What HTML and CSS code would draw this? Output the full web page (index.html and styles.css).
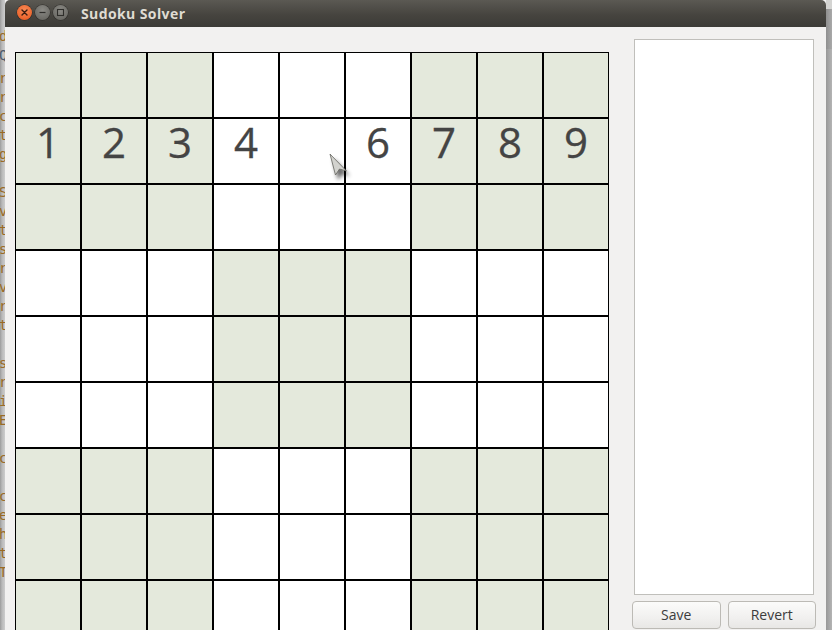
FILE: index.html
```html
<!DOCTYPE html>
<html>
<head>
<meta charset="utf-8">
<title>Sudoku Solver</title>
<link rel="stylesheet" href="styles.css">
</head>
<body>
<div class="screen">
  <div class="edge-left">
    <div class="bg-line">d</div>
    <div class="bg-line icon">Q</div>
    <div class="bg-line">r</div>
    <div class="bg-line">r</div>
    <div class="bg-line">c</div>
    <div class="bg-line">t</div>
    <div class="bg-line">g</div>
    <div class="bg-line gap">S</div>
    <div class="bg-line">v</div>
    <div class="bg-line">t</div>
    <div class="bg-line">s</div>
    <div class="bg-line">r</div>
    <div class="bg-line">v</div>
    <div class="bg-line">r</div>
    <div class="bg-line">t</div>
    <div class="bg-line gap">s</div>
    <div class="bg-line">r</div>
    <div class="bg-line">i</div>
    <div class="bg-line">E</div>
    <div class="bg-line gap">c</div>
    <div class="bg-line gap">c</div>
    <div class="bg-line">e</div>
    <div class="bg-line">h</div>
    <div class="bg-line">t</div>
    <div class="bg-line">T</div>
  </div>
  <div class="window">
    <div class="titlebar">
      <div class="wm-buttons">
        <span class="wm-btn close">
          <svg width="15" height="15" viewBox="0 0 15 15"><path d="M5 5 L10 10 M10 5 L5 10" stroke="#3a1d10" stroke-width="1.4" stroke-linecap="round"/></svg>
        </span>
        <span class="wm-btn">
          <svg width="15" height="15" viewBox="0 0 15 15"><path d="M4.5 7.5 H10.5" stroke="#2f2e2b" stroke-width="1.2"/></svg>
        </span>
        <span class="wm-btn">
          <svg width="15" height="15" viewBox="0 0 15 15"><rect x="4.5" y="4.5" width="6" height="6" fill="none" stroke="#2f2e2b" stroke-width="1.1"/></svg>
        </span>
      </div>
      <div class="title">Sudoku Solver</div>
    </div>
    <div class="content">
      <div class="board">
        <div class="cell g"></div><div class="cell g"></div><div class="cell g"></div><div class="cell"></div><div class="cell"></div><div class="cell"></div><div class="cell g"></div><div class="cell g"></div><div class="cell g"></div>
        <div class="cell g">1</div><div class="cell g">2</div><div class="cell g">3</div><div class="cell">4</div><div class="cell"></div><div class="cell">6</div><div class="cell g">7</div><div class="cell g">8</div><div class="cell g">9</div>
        <div class="cell g"></div><div class="cell g"></div><div class="cell g"></div><div class="cell"></div><div class="cell"></div><div class="cell"></div><div class="cell g"></div><div class="cell g"></div><div class="cell g"></div>
        <div class="cell"></div><div class="cell"></div><div class="cell"></div><div class="cell g"></div><div class="cell g"></div><div class="cell g"></div><div class="cell"></div><div class="cell"></div><div class="cell"></div>
        <div class="cell"></div><div class="cell"></div><div class="cell"></div><div class="cell g"></div><div class="cell g"></div><div class="cell g"></div><div class="cell"></div><div class="cell"></div><div class="cell"></div>
        <div class="cell"></div><div class="cell"></div><div class="cell"></div><div class="cell g"></div><div class="cell g"></div><div class="cell g"></div><div class="cell"></div><div class="cell"></div><div class="cell"></div>
        <div class="cell g"></div><div class="cell g"></div><div class="cell g"></div><div class="cell"></div><div class="cell"></div><div class="cell"></div><div class="cell g"></div><div class="cell g"></div><div class="cell g"></div>
        <div class="cell g"></div><div class="cell g"></div><div class="cell g"></div><div class="cell"></div><div class="cell"></div><div class="cell"></div><div class="cell g"></div><div class="cell g"></div><div class="cell g"></div>
        <div class="cell g"></div><div class="cell g"></div><div class="cell g"></div><div class="cell"></div><div class="cell"></div><div class="cell"></div><div class="cell g"></div><div class="cell g"></div><div class="cell g"></div>
      </div>
      <div class="side">
        <div class="textview"></div>
        <div class="actions">
          <button class="btn">Save</button>
          <button class="btn">Revert</button>
        </div>
      </div>
    </div>
  </div>
  <div class="edge-right">
    <div class="er-top"></div>
    <div class="er-band"></div>
    <div class="er-rest"></div>
  </div>
  <svg class="pointer" width="30" height="34" viewBox="0 0 30 34">
    <defs>
      <filter id="sh" x="-50%" y="-50%" width="200%" height="200%">
        <feGaussianBlur stdDeviation="2.2"/>
      </filter>
    </defs>
    <polygon points="4,5 9,27 14,21 21,23" fill="#000" opacity="0.6" filter="url(#sh)"/>
    <polygon points="1,1 6.5,22 10.5,16 17.5,18" fill="#d2d2ce" stroke="#66665f" stroke-width="0.8" stroke-linejoin="round"/>
  </svg>
</div>
</body>
</html>
```
FILE: styles.css
```css
html, body {
  margin: 0;
  padding: 0;
  width: 832px;
  height: 630px;
  overflow: hidden;
  background: #f2f1f0;
}

.screen {
  position: relative;
  display: flex;
  width: 832px;
  height: 630px;
  overflow: hidden;
}

.edge-left {
  width: 5px;
  flex: none;
  overflow: hidden;
  background: linear-gradient(to right, #9b9b9b 0, #b9b9b9 2px, #cdcdcd 5px);
  padding-top: 27px;
  box-sizing: border-box;
}

.bg-line {
  font-family: "DejaVu Sans Mono", monospace;
  font-size: 14px;
  line-height: 19px;
  color: #9a6a24;
  margin-left: -1px;
  white-space: nowrap;
}

.bg-line.icon {
  color: #4d5b6c;
  margin-bottom: 4px;
}

.bg-line.gap {
  margin-top: 19px;
}

.edge-right {
  width: 6px;
  flex: none;
  display: flex;
  flex-direction: column;
}

.er-top {
  height: 9px;
  background: #d4d4d2;
}

.er-band {
  height: 40px;
  background: linear-gradient(to right, #8f8f8f, #a9a9a9);
}

.er-rest {
  flex: 1;
  background: linear-gradient(to right, #989898, #b4b4b4);
}

.window {
  flex: 1;
  display: flex;
  flex-direction: column;
  background: #f2f1f0;
  min-width: 0;
}

.titlebar {
  height: 27px;
  flex: none;
  display: flex;
  align-items: center;
  background: linear-gradient(to bottom, #5b5953 0%, #46443f 55%, #3c3b37 100%);
  border-radius: 5px 5px 0 0;
  box-sizing: border-box;
  padding-left: 12px;
}

.wm-buttons {
  display: flex;
  gap: 3px;
  margin-top: -2px;
}

.wm-btn {
  width: 15px;
  height: 15px;
  border-radius: 50%;
  background: radial-gradient(circle at 50% 35%, #8b8a85 0%, #6d6c67 70%, #5a5954 100%);
  box-shadow: 0 0 0 0.5px #2e2d2a;
  display: block;
}

.wm-btn svg {
  display: block;
}

.wm-btn.close {
  background: radial-gradient(circle at 50% 35%, #f68a57 0%, #ee6a32 60%, #d9501d 100%);
}

.title {
  margin-left: 13px;
  margin-top: -1px;
  font-family: "Open Sans", "DejaVu Sans", sans-serif;
  font-weight: 700;
  font-size: 14px;
  color: #dfdbd2;
  letter-spacing: 0.4px;
}

.content {
  flex: 1;
  display: flex;
  align-items: flex-start;
  gap: 23px;
  padding: 12px 10px 0 10px;
  min-height: 0;
}

.board {
  margin-top: 13px;
  display: grid;
  grid-template-columns: repeat(9, 66px);
  grid-auto-rows: 66px;
  flex: none;
}

.cell {
  box-sizing: border-box;
  border: 1px solid #000;
  background: #ffffff;
  font-family: "Open Sans", "DejaVu Sans", sans-serif;
  font-size: 42px;
  line-height: 42px;
  padding-top: 2px;
  text-align: center;
  color: #444444;
  -webkit-text-stroke: 0.3px #444444;
}

.cell.g {
  background: #e4e9dc;
}

.side {
  width: 184px;
  flex: none;
  display: flex;
  flex-direction: column;
}

.textview {
  margin: 0 2px;
  height: 556px;
  box-sizing: border-box;
  border: 1px solid #c0bfbb;
  background: #ffffff;
}

.actions {
  display: flex;
  gap: 7px;
  margin-top: 6px;
}

.btn {
  flex: 1;
  height: 28px;
  box-sizing: border-box;
  border: 1px solid #bcbab5;
  border-radius: 4px;
  background: linear-gradient(to bottom, #fbfbfa 0%, #f1f0ef 60%, #e8e7e5 100%);
  font-family: "Open Sans", "DejaVu Sans", sans-serif;
  font-size: 14px;
  color: #3c3c3c;
  padding: 0 0 2px 0;
}

.pointer {
  position: absolute;
  left: 329px;
  top: 153px;
}
```
